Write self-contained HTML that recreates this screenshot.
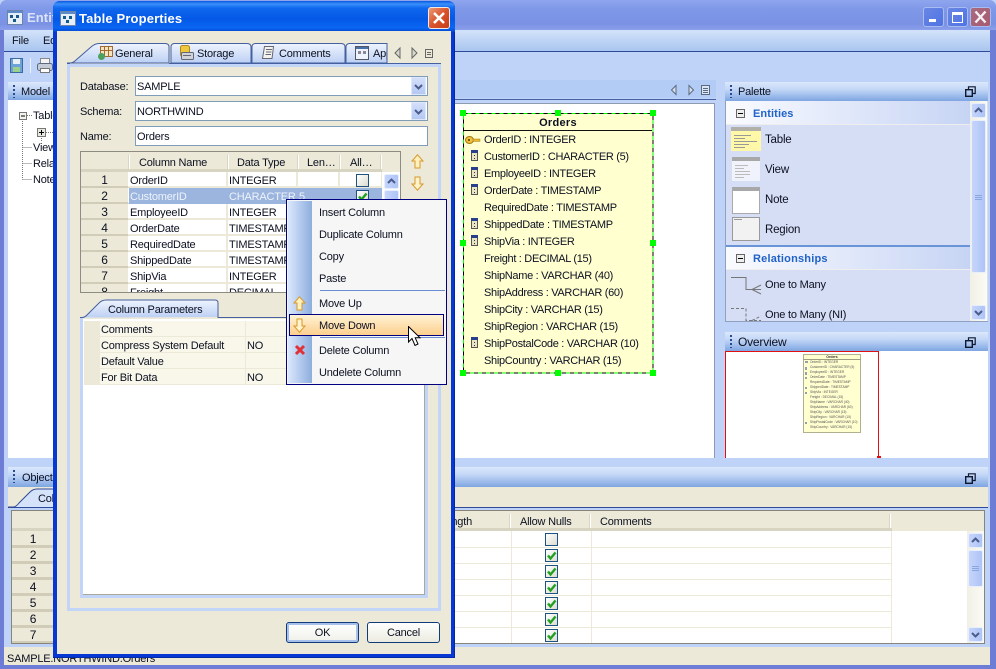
<!DOCTYPE html>
<html><head><meta charset="utf-8"><title>Table Properties</title>
<style>
html,body{margin:0;padding:0}
body{width:996px;height:669px;overflow:hidden;position:relative;background:#bfd3f8;font:11px/14px "Liberation Sans",sans-serif;color:#0c1020;letter-spacing:-.2px}
svg text{letter-spacing:0}
.a{position:absolute}
.t{position:absolute;white-space:nowrap;line-height:14px;height:14px;margin-top:1px}
.e{letter-spacing:-.31px}
.h{position:absolute;background:linear-gradient(#dbe8fc,#c2d6f6 40%,#7ea6e2)}
.g{position:absolute;width:2px;height:13px;background-image:repeating-linear-gradient(#2a4a90 0 2px,transparent 2px 4px)}
.combo{position:absolute;left:135px;width:291px;height:18px;background:#fff;border:1px solid #7f9db9}
.hd{position:absolute;width:1px;background:#fff;border-left:1px solid #d8d5c4}
.r{position:absolute;display:flex;height:16px}
.r>div{height:14px;line-height:18px;border-bottom:2px solid #ece9d8;border-right:2px solid #ece9d8;background:#fff;white-space:nowrap;overflow:hidden;padding-left:1px;box-sizing:content-box}
.r>.n{background:#ece9d8;border-bottom:2px solid #d0ccb8;border-right:1px solid #fff;text-align:center;padding:0;font-size:12px;line-height:16px}
.sel>div{background:#9bb5de;color:#eef3fb;border-color:#9bb5de}
.cb{position:absolute;width:11px;height:11px;border:1px solid #1c5180;background:linear-gradient(135deg,#fff,#dcdcd2)}
.sb{position:absolute;width:15px;background:linear-gradient(90deg,#c6d5fb,#aec4f6);border:1px solid #e8effc;border-radius:2px;box-sizing:border-box}
.dt{position:absolute;width:6px;height:6px;background:#0f0;border:0}
.gr{position:absolute;left:100px;width:325px;height:15px;background:#f8f7ea;border-bottom:1px solid #ece9d8}
</style></head><body>
<svg width="0" height="0" style="position:absolute">
<symbol id="chk" viewBox="0 0 11 11"><path d="M2 5.500 L4.500 8.500 L9.500 2.500" fill="none" stroke="#21a121" stroke-width="2.400"/></symbol>
<symbol id="chev" viewBox="0 0 9 6"><path d="M1 1 L4.500 4.500 L8 1" fill="none" stroke="#4a5c8c" stroke-width="2"/></symbol>
<symbol id="chup" viewBox="0 0 9 6"><path d="M1 5 L4.500 1.500 L8 5" fill="none" stroke="#4a5c8c" stroke-width="2"/></symbol>
<symbol id="up" viewBox="0 0 13 15"><path d="M6.500 .8 L12 7 H9 V14 H4 V7 H1 Z" fill="#fff0bc" stroke="#d8982c"/></symbol>
<symbol id="dn" viewBox="0 0 13 15"><path d="M6.500 14.200 L12 8 H9 V1 H4 V8 H1 Z" fill="#fff3cc" stroke="#d8982c"/></symbol>
<symbol id="door" viewBox="0 0 7 11"><rect x=".5" y=".5" width="6" height="10" fill="#e8e4c4" stroke="#555"/><rect x="0" y="0" width="7" height="3" fill="#28408c"/><rect x="3" y="5" width="1" height="1" fill="#333"/><rect x="3" y="8" width="1" height="1" fill="#333"/></symbol>
<symbol id="rest" viewBox="0 0 11 11"><path d="M3.500 3 V.8 H10.200 V7.500 H8" fill="none" stroke="#101830" stroke-width="1.200"/><rect x=".7" y="3.700" width="6.600" height="6.600" fill="none" stroke="#101830" stroke-width="1.400"/></symbol>
<symbol id="app" viewBox="0 0 16 15"><rect x=".5" y=".5" width="15" height="14" fill="#e6eefa" stroke="#6d84a8"/><rect x="1" y="1" width="14" height="2" fill="#5b8cc9"/><g fill="#145a88"><rect x="3" y="5" width="3" height="3"/><rect x="9" y="5" width="3" height="3"/><rect x="6" y="9" width="3" height="3"/></g></symbol>
</svg>

<!-- main window frame -->
<div class="a" style="left:0;top:0;width:996px;height:669px;background:#6d7cd4;border-radius:7px 7px 0 0"></div>
<div class="a" style="left:0;top:0;width:996px;height:30px;border-radius:7px 7px 0 0;background:linear-gradient(#8fa6ee,#7f98e8 30%,#7b92e4 80%,#8ba0ea)"></div>
<div class="a" style="left:4px;top:30px;width:986px;height:635px;background:#bfd3f8"></div>
<svg class="a" style="left:7px;top:10px" width="16" height="15"><use href="#app"/></svg>
<div class="t" style="left:27px;top:10px;color:#dbe3f8;font-size:13px;font-weight:bold;letter-spacing:.1px">Entities</div>
<!-- window buttons -->
<div class="a" style="left:923px;top:7px;width:19px;height:18px;border:1px solid #a9bcf0;border-radius:3px;background:linear-gradient(135deg,#6a86e4,#4f74e4)"><div class="a" style="left:5px;top:11px;width:7px;height:3px;background:#fff"></div></div>
<div class="a" style="left:947px;top:7px;width:19px;height:18px;border:1px solid #a9bcf0;border-radius:3px;background:linear-gradient(135deg,#6a86e4,#4f74e4)"><div class="a" style="left:4px;top:4px;width:9px;height:7px;border:1px solid #fff;border-top:3px solid #fff"></div></div>
<div class="a" style="left:970px;top:7px;width:19px;height:18px;border:1px solid #a9bcf0;border-radius:3px;background:linear-gradient(135deg,#a86a80,#a85a70)"><svg class="a" style="left:3px;top:2px" width="13" height="14"><path d="M1.500 1.500 L11.500 12.500 M11.500 1.500 L1.500 12.500" stroke="#f4f0f4" stroke-width="2.400"/></svg></div>
<!-- menu -->
<div class="a" style="left:4px;top:30px;width:986px;height:21px;background:linear-gradient(#d3e3fa,#a9c5ef)"></div>
<div class="a" style="left:4px;top:51px;width:986px;height:1px;background:#2f4a98"></div>
<div class="t" style="left:12px;top:33px">File</div><div class="t" style="left:43px;top:33px">Edit</div>
<!-- toolbar icons -->
<svg class="a" style="left:9px;top:57px" width="40" height="17"><path d="M1.500 1.500 H13.500 V15.500 H1.500 Z" fill="#6ea3d8" stroke="#3a6aa0"/><rect x="4" y="2" width="7" height="5" fill="#e8f0f8"/><rect x="4" y="10" width="7" height="5" fill="#9bd08c"/><rect x="21" y="1" width="1" height="15" fill="#e8f0fc"/></svg>
<svg class="a" style="left:36px;top:57px" width="18" height="17"><rect x="4.500" y="1.500" width="9" height="6" fill="#f4f4f4" stroke="#888"/><rect x="1.500" y="6.500" width="15" height="7" rx="2" fill="#c4ccd8" stroke="#5d6a80"/><rect x="4.500" y="11.500" width="9" height="4" fill="#fff" stroke="#777"/></svg>

<!-- model panel -->
<div class="h" style="left:8px;top:82px;width:60px;height:18px"></div>
<div class="g" style="left:13px;top:85px"></div>
<div class="t" style="left:21px;top:84px">Model</div>
<div class="a" style="left:8px;top:100px;width:60px;height:358px;background:#fff"></div>
<svg class="a" style="left:17px;top:109px" width="40" height="75"><path d="M5.500 10 V70.500 M5.500 70.500 H15 M5.500 38.500 H15 M5.500 54.500 H15 M10 6.500 H16 M24.500 27 V33 M29 23.500 H36" stroke="#777" stroke-dasharray="1 1" fill="none"/><rect x="2.500" y="3.500" width="7" height="7" fill="#f4f4ee" stroke="#777"/><path d="M4 7 H8" stroke="#000"/><rect x="20.500" y="19.500" width="8" height="8" fill="#e8e8e0" stroke="#777"/><path d="M22 23.500 H27 M24.500 21 V26" stroke="#000"/></svg>
<div class="t" style="left:33px;top:108px">Tables</div>
<div class="t" style="left:33px;top:140px">Views</div>
<div class="t" style="left:33px;top:156px">Relationships</div>
<div class="t" style="left:33px;top:172px">Notes</div>

<!-- editor -->
<div class="a" style="left:455px;top:80px;width:261px;height:18px;background:#b3ccf5"></div>
<div class="a" style="left:455px;top:99px;width:261px;height:1px;background:#44609f"></div>
<div class="a" style="left:455px;top:103px;width:260px;height:355px;background:#fff;border-right:1px solid #8e9ab0;border-top:1px solid #8e9ab0;box-sizing:border-box"></div>
<svg class="a" style="left:668px;top:84px" width="44" height="12"><path d="M8 1.500 L3.500 6 L8 10.500 Z M21 1.500 L25.500 6 L21 10.500 Z" fill="#d8e0ec" stroke="#5a6a80"/><rect x="33.500" y="1.500" width="8" height="9" fill="#dbe5f5" stroke="#5a6a80"/><path d="M35 4.500 H40 M35 6.500 H40 M35 8.500 H40" stroke="#5a6a80"/></svg>

<!-- entity -->
<div class="a" style="left:463px;top:113px;width:190px;height:260px;background:#ffffd0;box-sizing:border-box"></div>
<svg class="a" style="left:463px;top:113px" width="191" height="261"><rect x=".5" y=".5" width="189.500" height="259.500" fill="none" stroke="#0f0"/><rect x=".5" y=".5" width="189.500" height="259.500" fill="none" stroke="#000" stroke-dasharray="4 4"/></svg>
<div class="a" style="left:464px;top:130px;width:188px;height:1px;background:#111"></div>
<div class="t" style="left:463px;top:115px;width:190px;text-align:center;font-weight:bold;letter-spacing:.3px">Orders</div>
<div class="t e" style="left:484px;top:132px">OrderID : INTEGER</div>
<div class="t e" style="left:484px;top:149px">CustomerID : CHARACTER (5)</div>
<div class="t e" style="left:484px;top:166px">EmployeeID : INTEGER</div>
<div class="t e" style="left:484px;top:183px">OrderDate : TIMESTAMP</div>
<div class="t e" style="left:484px;top:200px">RequiredDate : TIMESTAMP</div>
<div class="t e" style="left:484px;top:217px">ShippedDate : TIMESTAMP</div>
<div class="t e" style="left:484px;top:234px">ShipVia : INTEGER</div>
<div class="t e" style="left:484px;top:251px">Freight : DECIMAL (15)</div>
<div class="t e" style="left:484px;top:268px">ShipName : VARCHAR (40)</div>
<div class="t e" style="left:484px;top:285px">ShipAddress : VARCHAR (60)</div>
<div class="t e" style="left:484px;top:302px">ShipCity : VARCHAR (15)</div>
<div class="t e" style="left:484px;top:319px">ShipRegion : VARCHAR (15)</div>
<div class="t e" style="left:484px;top:336px">ShipPostalCode : VARCHAR (10)</div>
<div class="t e" style="left:484px;top:353px">ShipCountry : VARCHAR (15)</div>
<svg class="a" style="left:465px;top:135px" width="16" height="10"><ellipse cx="4.500" cy="5" rx="4" ry="3.500" fill="#f0c040" stroke="#a07a10"/><rect x="3" y="4" width="2" height="2" fill="#7a5a10"/><rect x="8" y="4" width="7" height="2.400" fill="#e8b830" stroke="#a07a10" stroke-width=".5"/></svg>
<svg class="a" style="left:471px;top:150px" width="7" height="11"><use href="#door"/></svg>
<svg class="a" style="left:471px;top:167px" width="7" height="11"><use href="#door"/></svg>
<svg class="a" style="left:471px;top:184px" width="7" height="11"><use href="#door"/></svg>
<svg class="a" style="left:471px;top:218px" width="7" height="11"><use href="#door"/></svg>
<svg class="a" style="left:471px;top:235px" width="7" height="11"><use href="#door"/></svg>
<svg class="a" style="left:471px;top:337px" width="7" height="11"><use href="#door"/></svg>
<div class="dt" style="left:460px;top:110px"></div><div class="dt" style="left:555px;top:110px"></div><div class="dt" style="left:650px;top:110px"></div>
<div class="dt" style="left:460px;top:240px"></div><div class="dt" style="left:650px;top:240px"></div>
<div class="dt" style="left:460px;top:370px"></div><div class="dt" style="left:555px;top:370px"></div><div class="dt" style="left:650px;top:370px"></div>

<!-- palette -->
<div class="h" style="left:725px;top:82px;width:263px;height:19px"></div>
<div class="g" style="left:730px;top:85px"></div>
<div class="t" style="left:738px;top:84px">Palette</div>
<svg class="a" style="left:965px;top:86px" width="11" height="11"><use href="#rest"/></svg>
<div class="a" style="left:725px;top:101px;width:263px;height:221px;background:#d6def6;border-bottom:1px solid #8fa0c0;border-left:1px solid #8fa0c0;box-sizing:border-box"></div>
<div class="a" style="left:726px;top:101px;width:244px;height:23px;background:linear-gradient(90deg,#fafbff,#c6d4f4);border-bottom:1px solid #eee"></div>
<div class="a" style="left:736px;top:109px;width:7px;height:7px;border:1px solid #666;background:#eee"><div class="a" style="left:1px;top:3px;width:5px;height:1px;background:#000"></div></div>
<div class="t" style="left:753px;top:106px;font-weight:bold;color:#1f62c8;letter-spacing:.1px">Entities</div>
<svg class="a" style="left:731px;top:127px" width="31" height="25"><rect width="30" height="24" fill="#fff8a8"/><rect width="30" height="4" fill="#b0b0a8"/><path d="M3 8.500H20M3 11.500H14M3 14.500H26M3 17.500H18M3 20.500H14" stroke="#999"/></svg>
<div class="t" style="left:765px;top:132px;font-size:11.500px">Table</div>
<svg class="a" style="left:732px;top:157px" width="29" height="25"><rect width="28" height="24" fill="#f0f2fc"/><rect width="28" height="4" fill="#a8a8a8"/><path d="M3 8.500H16M3 11.500H12M3 14.500H18M3 17.500H18M3 20.500H12" stroke="#bbb"/></svg>
<div class="t" style="left:765px;top:162px;font-size:11.500px">View</div>
<div class="a" style="left:732px;top:187px;width:26px;height:22px;background:#fff;border:1px solid #aaa;border-top:4px solid #a8a8a8"></div>
<div class="t" style="left:765px;top:192px;font-size:11.500px">Note</div>
<div class="a" style="left:732px;top:217px;width:26px;height:22px;background:#f2f2f2;border:1px solid #999"><div class="a" style="left:1px;top:1px;width:8px;height:1px;background:#999"></div></div>
<div class="t" style="left:765px;top:222px;font-size:11.500px">Region</div>
<div class="a" style="left:726px;top:245px;width:244px;height:25px;background:linear-gradient(90deg,#fafbff,#c6d4f4);border-top:2px solid #6a94d8;border-bottom:1px solid #eee;box-sizing:border-box"></div>
<div class="a" style="left:736px;top:254px;width:7px;height:7px;border:1px solid #666;background:#eee"><div class="a" style="left:1px;top:3px;width:5px;height:1px;background:#000"></div></div>
<div class="t" style="left:753px;top:251px;font-weight:bold;color:#1f62c8;letter-spacing:.2px">Relationships</div>
<svg class="a" style="left:730px;top:277px" width="34" height="44"><path d="M1 .5 H16 V12.500 H31 M22 12.500 L31 8 M22 12.500 L31 17" fill="none" stroke="#777"/><path d="M1 31.500 H16 V43.500 H31 M22 43.500 L31 39" fill="none" stroke="#777" stroke-dasharray="3 2"/></svg>
<div class="t" style="left:765px;top:277px">One to Many</div>
<div class="t" style="left:765px;top:307px">One to Many (NI)</div>
<div class="a" style="left:970px;top:101px;width:17px;height:220px;background:linear-gradient(90deg,#f0f0e6,#fbfbf4)"></div>
<div class="sb" style="left:971px;top:103px;height:15px"><svg class="a" style="left:2px;top:3px" width="9" height="6"><use href="#chup"/></svg></div>
<div class="sb" style="left:971px;top:120px;height:153px"><svg class="a" style="left:3px;top:73px" width="7" height="7"><path d="M0 1.500H7M0 3.500H7M0 5.500H7" stroke="#8aa6e0"/></svg></div>
<div class="sb" style="left:971px;top:305px;height:15px"><svg class="a" style="left:2px;top:4px" width="9" height="6"><use href="#chev"/></svg></div>

<!-- overview -->
<div class="h" style="left:725px;top:332px;width:263px;height:19px"></div>
<div class="g" style="left:730px;top:335px"></div>
<div class="t" style="left:738px;top:334px;font-size:12px">Overview</div>
<svg class="a" style="left:965px;top:337px" width="11" height="11"><use href="#rest"/></svg>
<div class="a" style="left:725px;top:351px;width:263px;height:107px;background:#fff"></div>
<div class="a" style="left:725px;top:351px;width:154px;height:107px;border-top:1px solid #e01010;border-right:1px solid #e01010;border-left:1px solid #e01010;box-sizing:border-box"></div>
<div class="a" style="left:877px;top:456px;width:4px;height:2px;background:#e01010"></div>
<div class="a" style="left:803px;top:354px;width:58px;height:79px;background:#ffffd0;border:1px solid #b0b090;box-sizing:border-box;overflow:hidden"></div>
<svg class="a" style="left:803px;top:354px" width="58" height="79"><rect x="0" y="5" width="58" height="1" fill="#a0a080"/><text x="29" y="4" font-size="3.500" font-family="Liberation Sans" font-weight="bold" text-anchor="middle" fill="#333">Orders</text><g font-size="3.200" font-family="Liberation Sans" fill="#555"><text x="7" y="9">OrderID : INTEGER</text><text x="7" y="14">CustomerID : CHARACTER (5)</text><text x="7" y="19">EmployeeID : INTEGER</text><text x="7" y="24">OrderDate : TIMESTAMP</text><text x="7" y="29">RequiredDate : TIMESTAMP</text><text x="7" y="34">ShippedDate : TIMESTAMP</text><text x="7" y="39">ShipVia : INTEGER</text><text x="7" y="44">Freight : DECIMAL (15)</text><text x="7" y="49">ShipName : VARCHAR (40)</text><text x="7" y="54">ShipAddress : VARCHAR (60)</text><text x="7" y="59">ShipCity : VARCHAR (15)</text><text x="7" y="64">ShipRegion : VARCHAR (15)</text><text x="7" y="69">ShipPostalCode : VARCHAR (10)</text><text x="7" y="74">ShipCountry : VARCHAR (15)</text></g><path d="M2 8H5M3 13V16M3 18V21M3 23V25M3 33V35M3 38V40M3 68V70" stroke="#28408c"/></svg>

<!-- bottom panel -->
<div class="h" style="left:8px;top:467px;width:980px;height:20px"></div>
<div class="g" style="left:13px;top:470px"></div>
<div class="t" style="left:22px;top:470px">Objects</div>
<svg class="a" style="left:965px;top:473px" width="11" height="11"><use href="#rest"/></svg>
<div class="a" style="left:8px;top:487px;width:980px;height:20px;background:#ece9d8"></div>
<div class="a" style="left:8px;top:507px;width:980px;height:1px;background:#2f4a98"></div>
<div class="a" style="left:8px;top:508px;width:980px;height:2px;background:#bfd3f8"></div>
<svg class="a" style="left:8px;top:488px" width="50" height="20"><path d="M0 19 H5 Q8 19 11 15 L22 4 Q25 1 29 1 H50 V19 Z" fill="#d4e2fa"/><path d="M0 19 H5 Q8 19 11 15 L22 4 Q25 1 29 1 H50" fill="none" stroke="#2f4a98"/></svg>
<div class="t" style="left:38px;top:491px">Column</div>
<div class="a" style="left:11px;top:510px;width:974px;height:134px;background:#fff;border:1px solid #85857c;box-sizing:border-box"></div>
<div class="a" style="left:12px;top:511px;width:972px;height:20px;background:#ece9d8"></div>
<div class="a" style="left:12px;top:528px;width:880px;height:3px;background:#d8d4c2"></div>
<div class="a" style="left:12px;top:531px;width:42px;height:112px;background:#ece9d8"></div>
<div class="t" style="left:12px;top:531px;width:42px;text-align:center;font-size:12px">1</div>
<div class="t" style="left:12px;top:547px;width:42px;text-align:center;font-size:12px">2</div>
<div class="t" style="left:12px;top:563px;width:42px;text-align:center;font-size:12px">3</div>
<div class="t" style="left:12px;top:579px;width:42px;text-align:center;font-size:12px">4</div>
<div class="t" style="left:12px;top:595px;width:42px;text-align:center;font-size:12px">5</div>
<div class="t" style="left:12px;top:611px;width:42px;text-align:center;font-size:12px">6</div>
<div class="t" style="left:12px;top:627px;width:42px;text-align:center;font-size:12px">7</div>
<div class="a" style="left:12px;top:545px;width:42px;height:3px;background:#d0ccb8"></div><div class="a" style="left:12px;top:561px;width:42px;height:3px;background:#d0ccb8"></div><div class="a" style="left:12px;top:577px;width:42px;height:3px;background:#d0ccb8"></div><div class="a" style="left:12px;top:593px;width:42px;height:3px;background:#d0ccb8"></div><div class="a" style="left:12px;top:609px;width:42px;height:3px;background:#d0ccb8"></div><div class="a" style="left:12px;top:625px;width:42px;height:3px;background:#d0ccb8"></div><div class="a" style="left:12px;top:641px;width:42px;height:2px;background:#d0ccb8"></div>
<div class="t" style="left:438px;top:514px;width:34px;text-align:right;overflow:hidden">Length</div>
<div class="t" style="left:520px;top:514px">Allow Nulls</div>
<div class="t" style="left:600px;top:514px">Comments</div>
<div class="hd" style="left:509px;top:514px;height:14px"></div><div class="hd" style="left:589px;top:514px;height:14px"></div><div class="hd" style="left:889px;top:514px;height:14px"></div>
<div class="a" style="left:455px;top:547px;width:437px;height:1px;background:#ece9d8"></div>
<div class="a" style="left:455px;top:563px;width:437px;height:1px;background:#ece9d8"></div>
<div class="a" style="left:455px;top:579px;width:437px;height:1px;background:#ece9d8"></div>
<div class="a" style="left:455px;top:595px;width:437px;height:1px;background:#ece9d8"></div>
<div class="a" style="left:455px;top:611px;width:437px;height:1px;background:#ece9d8"></div>
<div class="a" style="left:455px;top:627px;width:437px;height:1px;background:#ece9d8"></div>
<div class="a" style="left:511px;top:531px;width:1px;height:112px;background:#ece9d8"></div>
<div class="a" style="left:591px;top:531px;width:1px;height:112px;background:#ece9d8"></div>
<div class="a" style="left:891px;top:531px;width:1px;height:112px;background:#ece9d8"></div>
<div class="cb" style="left:545px;top:533px"></div>
<div class="cb" style="left:545px;top:549px"><svg width="11" height="11"><use href="#chk"/></svg></div>
<div class="cb" style="left:545px;top:565px"><svg width="11" height="11"><use href="#chk"/></svg></div>
<div class="cb" style="left:545px;top:581px"><svg width="11" height="11"><use href="#chk"/></svg></div>
<div class="cb" style="left:545px;top:597px"><svg width="11" height="11"><use href="#chk"/></svg></div>
<div class="cb" style="left:545px;top:613px"><svg width="11" height="11"><use href="#chk"/></svg></div>
<div class="cb" style="left:545px;top:629px"><svg width="11" height="11"><use href="#chk"/></svg></div>
<div class="a" style="left:967px;top:531px;width:17px;height:112px;background:linear-gradient(90deg,#f0f0e6,#fbfbf4)"></div>
<div class="sb" style="left:968px;top:533px;height:15px"><svg class="a" style="left:2px;top:3px" width="9" height="6"><use href="#chup"/></svg></div>
<div class="sb" style="left:968px;top:550px;height:37px"><svg class="a" style="left:3px;top:14px" width="7" height="7"><path d="M0 1.500H7M0 3.500H7M0 5.500H7" stroke="#8aa6e0"/></svg></div>
<div class="sb" style="left:968px;top:627px;height:15px"><svg class="a" style="left:2px;top:4px" width="9" height="6"><use href="#chev"/></svg></div>
<!-- status -->
<div class="a" style="left:4px;top:647px;width:986px;height:18px;background:#ece9d8"></div>
<div class="t" style="left:7px;top:651px">SAMPLE.NORTHWIND.Orders</div>

<!-- DIALOG -->
<div class="a" style="left:53px;top:1px;width:402px;height:657px;background:#0838d4;border-radius:7px 7px 0 0;box-shadow:inset -1px -1px 0 #002aa8"></div>
<div class="a" style="left:53px;top:1px;width:402px;height:31px;border-radius:7px 7px 0 0;background:linear-gradient(#0a58e0,#3a90fa 3px,#1068ee 7px,#0458e6 18px,#0a66f4 27px,#0446cc)"></div>
<div class="a" style="left:57px;top:31px;width:394px;height:623px;background:#ece9d8"></div>
<svg class="a" style="left:60px;top:11px" width="16" height="15"><use href="#app"/></svg>
<div class="t" style="left:79px;top:11px;color:#fff;font-size:13px;font-weight:bold;letter-spacing:.15px">Table Properties</div>
<div class="a" style="left:428px;top:7px;width:20px;height:20px;border:1px solid #f4e8e0;border-radius:3px;background:linear-gradient(135deg,#ec9a78,#d8532c 50%,#c83c18)"><svg class="a" style="left:3px;top:3px" width="14" height="14"><path d="M2 2 L12 12 M12 2 L2 12" stroke="#fff" stroke-width="2.600"/></svg></div>

<!-- folder -->
<div class="a" style="left:67px;top:64px;width:374px;height:547px;border:3px solid #c2d5f8;box-sizing:border-box"></div>
<svg class="a" style="left:65px;top:42px" width="378" height="23">
<defs><linearGradient id="tg" x1="0" y1="0" x2="0" y2="1"><stop offset="0" stop-color="#eef4fe"/><stop offset="1" stop-color="#bcd0f4"/></linearGradient></defs>
<path d="M106 21 V5 Q106 2 109 1.500 H182 Q186 1.500 186 5 V21 Z" fill="url(#tg)" stroke="#44609f"/>
<path d="M187 21 V5 Q187 2 190 1.500 H276 Q280 1.500 280 5 V21 Z" fill="url(#tg)" stroke="#44609f"/>
<path d="M281 21 V5 Q281 2 284 1.500 H322 V21 Z" fill="url(#tg)" stroke="#44609f"/>
<path d="M2 21 H5 Q8 21 11 18 L26 5 Q30 1.500 34 1.500 H100 Q104 1.500 104 5 V21 Z" fill="url(#tg)" stroke="#44609f"/>
<path d="M2 21.500 H5 M104 21.500 H376" stroke="#44609f"/>
<path d="M335 6 L330 11 L335 16 Z M347 6 L352 11 L347 16 Z" fill="#d8d8cc" stroke="#666"/><rect x="360.500" y="7.500" width="7" height="8" fill="none" stroke="#666"/><path d="M362 10.500H366M362 12.500H366" stroke="#666"/></svg>
<svg class="a" style="left:97px;top:45px" width="16" height="16"><rect x="3.500" y="1.500" width="12" height="10" fill="#f4e4c0" stroke="#a06a30"/><path d="M3 5.500H15M7.500 1.500V11.500M11.500 1.500V11.500" stroke="#a06a30"/><circle cx="4.500" cy="11.500" r="3.500" fill="#4ea060"/></svg>
<svg class="a" style="left:178px;top:44px" width="16" height="17"><rect x="2.500" y="1.500" width="9" height="11" rx="2" fill="#f0c840" stroke="#b08820"/><rect x="3.500" y="8.500" width="12" height="7" rx="1" fill="#d0d4d8" stroke="#667"/><rect x="5" y="11" width="8" height="1" fill="#667"/></svg>
<svg class="a" style="left:261px;top:45px" width="15" height="15"><path d="M3.500 1.500 H12.500 L11 13.500 H1.500 Z" fill="#f4f4ec" stroke="#667"/><path d="M5 4.500H11M5 7H10.500M4.500 9.500H10" stroke="#667"/></svg>
<svg class="a" style="left:355px;top:46px" width="14" height="14"><rect x=".5" y=".5" width="13" height="13" fill="#eef2fa" stroke="#556"/><rect x="1" y="1" width="12" height="2" fill="#4a70a8"/><rect x="3" y="5" width="3" height="3" fill="#889"/><rect x="8" y="5" width="3" height="3" fill="#889"/></svg>
<div class="t" style="left:115px;top:46px">General</div>
<div class="t" style="left:197px;top:46px">Storage</div>
<div class="t" style="left:279px;top:46px">Comments</div>
<div class="t" style="left:373px;top:46px;width:14px;overflow:hidden">Appearance</div>

<!-- fields -->
<div class="t" style="left:80px;top:79px">Database:</div>
<div class="t" style="left:80px;top:104px">Schema:</div>
<div class="t" style="left:80px;top:129px">Name:</div>
<div class="combo" style="top:76px"></div>
<div class="combo" style="top:101px"></div>
<div class="combo" style="top:126px"></div>
<div class="t" style="left:137px;top:79px">SAMPLE</div>
<div class="t" style="left:137px;top:104px">NORTHWIND</div>
<div class="t" style="left:137px;top:129px">Orders</div>
<div class="a" style="left:411px;top:77px;width:15px;height:18px;background:linear-gradient(#d4dffa,#b4c8f4);border:1px solid #dfe8fa;box-sizing:border-box"><svg class="a" style="left:2px;top:6px" width="9" height="6"><use href="#chev"/></svg></div>
<div class="a" style="left:411px;top:102px;width:15px;height:18px;background:linear-gradient(#d4dffa,#b4c8f4);border:1px solid #dfe8fa;box-sizing:border-box"><svg class="a" style="left:2px;top:6px" width="9" height="6"><use href="#chev"/></svg></div>

<!-- columns table -->
<div class="a" style="left:80px;top:151px;width:321px;height:142px;background:#fff;border:1px solid #8c8c82;box-sizing:border-box;overflow:hidden"></div>
<div class="a" style="left:81px;top:152px;width:319px;height:20px;background:#ece9d8"></div>
<div class="a" style="left:81px;top:169px;width:301px;height:3px;background:#d8d4c2"></div>
<div class="hd" style="left:128px;top:155px;height:14px"></div><div class="hd" style="left:227px;top:155px;height:14px"></div><div class="hd" style="left:297px;top:155px;height:14px"></div><div class="hd" style="left:339px;top:155px;height:14px"></div><div class="hd" style="left:380px;top:155px;height:14px"></div>
<div class="t" style="left:139px;top:155px">Column Name</div>
<div class="t" style="left:237px;top:155px">Data Type</div>
<div class="t" style="left:307px;top:155px">Len…</div>
<div class="t" style="left:350px;top:155px">All…</div>
<div class="a" style="left:81px;top:172px;width:301px;height:120px;overflow:hidden">
<div class="r" style="top:0"><div class="n" style="width:47px">1</div><div style="width:96px">OrderID</div><div style="width:67px">INTEGER</div><div style="width:39px"></div><div style="width:40px"></div></div>
<div class="r sel" style="top:16px"><div class="n" style="width:47px;background:#ece9d8;color:#0c1020;border-bottom-color:#d0ccb8;border-right-color:#fff">2</div><div style="width:96px">CustomerID</div><div style="width:67px">CHARACTER</div><div style="width:39px">5</div><div style="width:40px"></div></div>
<div class="r" style="top:32px"><div class="n" style="width:47px">3</div><div style="width:96px">EmployeeID</div><div style="width:67px">INTEGER</div><div style="width:39px"></div><div style="width:40px"></div></div>
<div class="r" style="top:48px"><div class="n" style="width:47px">4</div><div style="width:96px">OrderDate</div><div style="width:67px">TIMESTAMP</div><div style="width:39px"></div><div style="width:40px"></div></div>
<div class="r" style="top:64px"><div class="n" style="width:47px">5</div><div style="width:96px">RequiredDate</div><div style="width:67px">TIMESTAMP</div><div style="width:39px"></div><div style="width:40px"></div></div>
<div class="r" style="top:80px"><div class="n" style="width:47px">6</div><div style="width:96px">ShippedDate</div><div style="width:67px">TIMESTAMP</div><div style="width:39px"></div><div style="width:40px"></div></div>
<div class="r" style="top:96px"><div class="n" style="width:47px">7</div><div style="width:96px">ShipVia</div><div style="width:67px">INTEGER</div><div style="width:39px"></div><div style="width:40px"></div></div>
<div class="r" style="top:112px"><div class="n" style="width:47px">8</div><div style="width:96px">Freight</div><div style="width:67px">DECIMAL</div><div style="width:39px"></div><div style="width:40px"></div></div>
</div>
<div class="cb" style="left:356px;top:174px"></div>
<div class="cb" style="left:356px;top:190px"><svg width="11" height="11"><use href="#chk"/></svg></div>
<div class="sb" style="left:384px;top:174px;height:15px"><svg class="a" style="left:2px;top:3px" width="9" height="6"><use href="#chup"/></svg></div>
<div class="sb" style="left:384px;top:190px;height:60px"></div>
<svg class="a" style="left:411px;top:154px" width="13" height="15"><use href="#up"/></svg>
<svg class="a" style="left:411px;top:176px" width="13" height="15"><use href="#dn"/></svg>

<!-- column parameters -->
<div class="a" style="left:80px;top:318px;width:348px;height:280px;border:3px solid #c2d5f8;border-top:0;box-sizing:border-box"></div>
<div class="a" style="left:83px;top:319px;width:342px;height:276px;background:#fff;border-right:1px solid #a8a89c;border-bottom:1px solid #a8a89c;box-sizing:border-box"></div>
<svg class="a" style="left:79px;top:299px" width="350" height="20"><path d="M1 18.500 H3 Q6 18.500 9 15 L20 4 Q23 1 27 1 H136 Q139 1 139 4 V18 Z" fill="url(#tg)"/><path d="M1 18.500 H3 Q6 18.500 9 15 L20 4 Q23 1 27 1 H136 Q139 1 139 4 V18.500 H349" fill="none" stroke="#44609f"/></svg>
<div class="t" style="left:108px;top:302px">Column Parameters</div>
<div class="a" style="left:84px;top:321px;width:16px;height:64px;background:#ece9d8"></div>
<div class="gr" style="top:321px"></div><div class="gr" style="top:337px"></div><div class="gr" style="top:353px"></div><div class="gr" style="top:369px"></div>
<div class="a" style="left:245px;top:321px;width:1px;height:64px;background:#ece9d8"></div>
<div class="t" style="left:101px;top:322px">Comments</div>
<div class="t" style="left:101px;top:338px">Compress System Default</div><div class="t" style="left:247px;top:338px">NO</div>
<div class="t" style="left:101px;top:354px">Default Value</div>
<div class="t" style="left:101px;top:370px">For Bit Data</div><div class="t" style="left:247px;top:370px">NO</div>

<!-- buttons -->
<div class="a" style="left:286px;top:622px;width:73px;height:21px;border:1px solid #0f3c78;border-radius:3px;background:linear-gradient(#fff,#f0f0ea);box-shadow:inset 0 0 0 2px #a8c0ec;text-align:center;line-height:21px;box-sizing:border-box">OK</div>
<div class="a" style="left:367px;top:622px;width:73px;height:21px;border:1px solid #0f3c78;border-radius:3px;background:linear-gradient(#fff,#ecebe0);text-align:center;line-height:21px;box-sizing:border-box">Cancel</div>

<!-- context menu -->
<div class="a" style="left:286px;top:199px;width:161px;height:186px;background:#f6f6f6;border:1px solid #000080;box-sizing:border-box"></div>
<div class="a" style="left:288px;top:201px;width:24px;height:182px;background:linear-gradient(90deg,#dbe7fc,#8daede)"></div>
<div class="t" style="left:319px;top:205px">Insert Column</div>
<div class="t" style="left:319px;top:227px">Duplicate Column</div>
<div class="t" style="left:319px;top:249px">Copy</div>
<div class="t" style="left:319px;top:271px">Paste</div>
<div class="a" style="left:320px;top:290px;width:125px;height:1px;background:#6a8cd0"></div>
<div class="t" style="left:319px;top:296px">Move Up</div>
<svg class="a" style="left:293px;top:296px" width="13" height="15"><use href="#up"/></svg>
<div class="a" style="left:289px;top:314px;width:155px;height:22px;background:linear-gradient(#fff3d4,#fdcf8e);border:1px solid #000080;box-sizing:border-box"></div>
<svg class="a" style="left:293px;top:318px" width="13" height="15"><use href="#dn"/></svg>
<div class="t" style="left:319px;top:318px">Move Down</div>
<div class="a" style="left:320px;top:337px;width:125px;height:1px;background:#6a8cd0"></div>
<svg class="a" style="left:294px;top:344px" width="12" height="12"><path d="M2 2 L10 10 M10 2 L2 10" stroke="#e03038" stroke-width="3"/></svg>
<div class="t" style="left:319px;top:343px">Delete Column</div>
<div class="t" style="left:319px;top:365px">Undelete Column</div>
<svg class="a" style="left:408px;top:326px" width="14" height="21"><path d="M.5 .5 V16 L4 12.500 L7 19.500 L10 18 L7.200 11.800 H12 Z" fill="#fff" stroke="#000"/></svg>
</body></html>
